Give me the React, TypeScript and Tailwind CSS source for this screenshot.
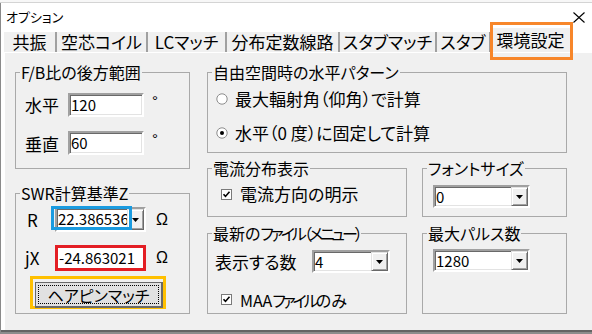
import { FC, ReactNode } from "react";

const jp = "font-['Noto_Sans_CJK_JP','Noto_Sans_CJK_SC',sans-serif] [font-feature-settings:'palt']";
const sunken = "bg-white border-2 border-t-[#a0a0a0] border-l-[#a0a0a0] border-r-white border-b-white shadow-[inset_1px_1px_0_#696969,inset_-1px_-1px_0_#e3e3e3]";

const Group: FC<{ title: ReactNode; className: string; children?: ReactNode }> = ({ title, className, children }) => (
    <fieldset className={`border border-[#a9a9a9] ${className}`}>
        <legend className="ml-[4px] px-[1px] text-[16px] leading-[18px]">{title}</legend>
        {children}
    </fieldset>
);

const Arrow = () => (
    <svg width="7" height="4" viewBox="0 0 7 4">
        <path d="M0 0h7L3.5 4z" fill="#000" />
    </svg>
);

const Combo: FC<{ value: string; className: string; children?: ReactNode }> = ({ value, className, children }) => (
    <div className={`relative flex ${sunken} ${className}`}>
        <div className="flex-1 overflow-hidden whitespace-nowrap pl-[1px] text-[15px] leading-[19px]">{value}</div>
        <div className="flex w-[17px] items-center justify-center bg-[#f0f0f0] border border-t-[#e3e3e3] border-l-[#e3e3e3] border-r-[#696969] border-b-[#696969] shadow-[inset_1px_1px_0_#fff,inset_-1px_-1px_0_#a0a0a0]">
            <Arrow />
        </div>
        {children}
    </div>
);

const Check = () => (
    <svg width="11" height="11" viewBox="0 0 11 11" className="flex-none">
        <rect x="0.5" y="0.5" width="10" height="10" fill="#fff" stroke="#7a7a7a" />
        <path d="M2.5 5.2l2 2.2 4-4.6" stroke="#000" strokeWidth="1.6" fill="none" />
    </svg>
);

const Radio: FC<{ on?: boolean }> = ({ on }) => (
    <svg width="12" height="12" viewBox="0 0 12 12" className="flex-none">
        <circle cx="6" cy="6" r="5.2" fill="#fff" stroke="#8c8c8c" />
        {on && <circle cx="6" cy="6" r="2" fill="#000" />}
    </svg>
);

const tabs: [string, string][] = [
    ["共振", "w-[53px]"],
    ["空芯コイル", "w-[91px]"],
    ["LCマッチ", "w-[79px]"],
    ["分布定数線路", "w-[113px]"],
    ["スタブマッチ", "w-[97px]"],
    ["スタブ", "w-[54px]"],
];

const App: FC = () => {
    return (
        <div className={`relative h-[334px] w-[592px] overflow-hidden bg-white text-black ${jp}`}>
            <div className="h-[3px] border-b border-[#d4d4d4] bg-[#f7f7f7]" />
            <div className="flex h-[331px] flex-col border-l border-[#8a8a8a]">
                {/* title bar */}
                <div className="flex h-[27px] items-start justify-between pl-[5px] pr-[7px]">
                    <span className="mt-[6px] text-[13px] leading-[16px]">オプション</span>
                    <svg width="12" height="11" viewBox="0 0 12 11" className="mt-[9px]">
                        <path d="M0.5 0.5l11 10M11.5 0.5l-11 10" stroke="#000" strokeWidth="1.1" />
                    </svg>
                </div>

                {/* tabs */}
                <div className="flex h-[22px] items-end pl-[3px]">
                    {tabs.map(([t, w]) => (
                        <div key={t} className={`flex h-[20px] items-center justify-center border-r-2 border-[#a0a0a0] bg-[#f0f0f0] text-[17px] leading-[20px] ${w}`}>
                            {t}
                        </div>
                    ))}
                    <div className="flex h-[24px] w-[81px] items-center justify-center border-r-2 border-[#a0a0a0] bg-[#f0f0f0] text-[17px] leading-[20px]">
                        環境設定
                    </div>
                </div>

                {/* page */}
                <div className="ml-[3px] flex flex-1 gap-[17px] border-l border-t border-white bg-[#f0f0f0] pl-[10px] pt-[10px]">
                    <div className="flex w-[175px] flex-col">
                        <Group title="F/B比の後方範囲" className="h-[106px] w-[175px]">
                            <div className="mt-[11px] flex items-center pl-[9px]">
                                <span className="w-[43px] text-[17px]">水平</span>
                                <div className={`h-[24px] w-[76px] pl-[1px] text-[15px] leading-[20px] ${sunken}`}>120</div>
                                <span className="ml-[8px] -mt-[8px] font-['Liberation_Sans'] text-[15px]">°</span>
                            </div>
                            <div className="mt-[13px] flex items-center pl-[9px]">
                                <span className="w-[43px] text-[17px]">垂直</span>
                                <div className={`h-[24px] w-[76px] pl-[1px] text-[15px] leading-[20px] ${sunken}`}>60</div>
                                <span className="ml-[8px] -mt-[8px] font-['Liberation_Sans'] text-[15px]">°</span>
                            </div>
                        </Group>

                        <Group title="SWR計算基準Z" className="mt-[15px] h-[130px] w-[175px]">
                            <div className="mt-[5px] flex h-[25px] items-center">
                                <span className="w-[39px] pl-[11px] text-[17px]">R</span>
                                <Combo value="22.386536" className="h-[25px] w-[91px]">
                                    <div className="absolute -left-[6px] -top-[3px] h-[24px] w-[81px] border-[3px] border-[#1a9be0]" />
                                </Combo>
                                <span className="ml-[10px] font-['Liberation_Sans'] text-[16px]">Ω</span>
                            </div>
                            <div className="mt-[13px] flex h-[26px] items-center">
                                <span className="w-[39px] pl-[9px] text-[17px]">jX</span>
                                <div className="h-[26px] w-[91px] border-[3px] border-[#e31e24] bg-white pl-[1px] text-[15px] leading-[20px]">-24.863021</div>
                                <span className="ml-[10px] font-['Liberation_Sans'] text-[16px]">Ω</span>
                            </div>
                            <div className="ml-[14px] mt-[5px] h-[33px] w-[136px] border-[3px] border-[#ffc000] pl-[2px] pt-[3px]">
                                <div className="h-[26px] w-[128px] border border-[#696969] border-b-2 border-r-2 bg-[#e1e1e1] p-[2px]">
                                    <div className="flex h-full items-center justify-center border border-dotted border-black text-[16px] leading-[18px]">
                                        ヘアピンマッチ
                                    </div>
                                </div>
                            </div>
                        </Group>
                    </div>

                    <div className="flex w-[360px] flex-col">
                        <Group title="自由空間時の水平パターン" className="h-[90px] w-[360px]">
                            <div className="mt-[8px] flex h-[20px] items-center pl-[8px]">
                                <Radio />
                                <span className="ml-[7px] text-[17px]">最大輻射角（仰角）で計算</span>
                            </div>
                            <div className="mt-[14px] flex h-[20px] items-center pl-[8px]">
                                <Radio on />
                                <span className="ml-[7px] text-[17px]">水平（0 度）に固定して計算</span>
                            </div>
                        </Group>

                        <div className="mt-[6px] flex gap-[15px]">
                            <Group title="電流分布表示" className="h-[58px] w-[200px]">
                                <div className="mt-[7px] flex h-[20px] items-center pl-[13px]">
                                    <Check />
                                    <span className="ml-[8px] text-[17px]">電流方向の明示</span>
                                </div>
                            </Group>
                            <Group title="フォントサイズ" className="h-[58px] w-[145px]">
                                <div className="mt-[8px] pl-[10px]">
                                    <Combo value="0" className="h-[23px] w-[97px]" />
                                </div>
                            </Group>
                        </div>

                        <div className="mt-[7px] flex gap-[15px]">
                            <Group
                                title={
                                    <>
                                        最新の<span className="tracking-[-3px]">ファイル（メニュー）</span>
                                    </>
                                }
                                className="h-[90px] w-[200px]"
                            >
                                <div className="mt-[7px] flex items-center pl-[7px]">
                                    <span className="w-[97px] text-[17px]">表示する数</span>
                                    <Combo value="4" className="h-[23px] w-[78px]" />
                                </div>
                                <div className="mt-[15px] flex h-[20px] items-center pl-[13px]">
                                    <Check />
                                    <span className="ml-[8px] text-[16px]">
                                        MAA<span className="tracking-[-3px]">ファイル</span>のみ
                                    </span>
                                </div>
                            </Group>
                            <Group title="最大パルス数" className="h-[90px] w-[145px]">
                                <div className="mt-[7px] pl-[10px]">
                                    <Combo value="1280" className="h-[23px] w-[97px]" />
                                </div>
                            </Group>
                        </div>
                    </div>
                </div>

                <div className="h-[2px] bg-[#646464]" />
                <div className="h-[2px] bg-[#8c8c8c]" />
            </div>

            {/* highlight around the selected tab */}
            <div className="pointer-events-none absolute left-[490px] top-[22px] h-[38px] w-[83px] border-[3px] border-[#f7862a]" />
        </div>
    );
};

export default App;
